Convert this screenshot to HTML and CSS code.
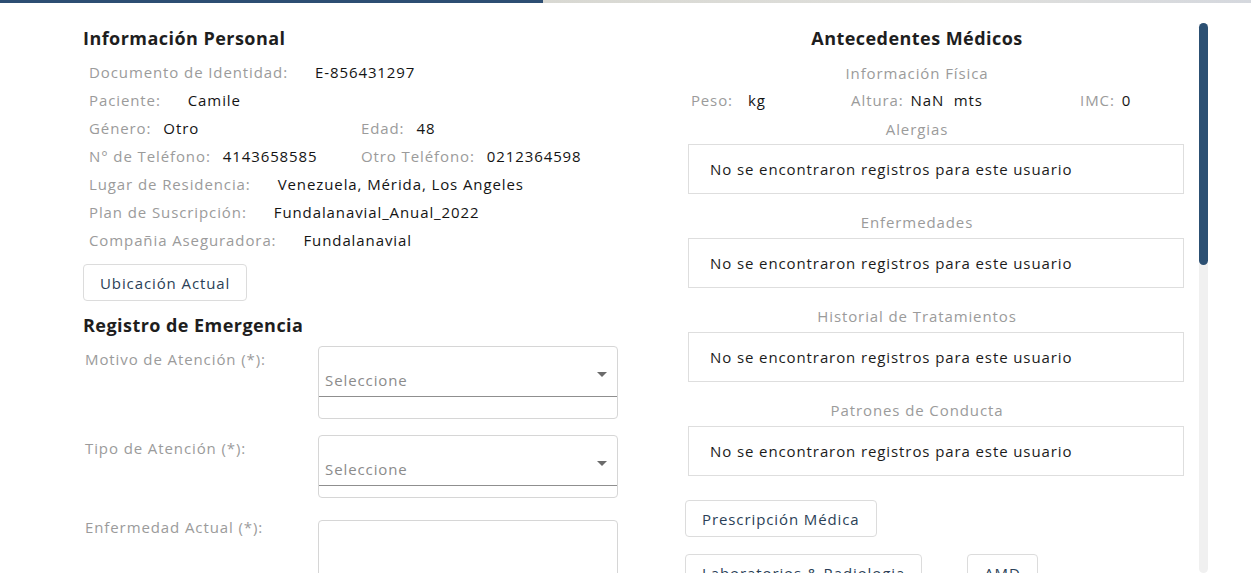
FILE: index.html
```html
<!DOCTYPE html>
<html lang="es">
<head>
<meta charset="utf-8">
<title>Historia</title>
<link rel="stylesheet" href="styles.css">
</head>
<body>
<div class="topbar"><div class="topbar-dark"></div><div class="topbar-light"></div></div>
<div class="frame">
  <div class="scroller">
    <div class="content">
      <section class="col-left">
        <h2 class="title">Información Personal</h2>
        <div class="info">
          <div class="row"><span class="lbl">Documento de Identidad:</span><span class="val wide">E-856431297</span></div>
          <div class="row"><span class="lbl">Paciente:</span><span class="val wide">Camile</span></div>
          <div class="row half">
            <div class="cell"><span class="lbl">Género:</span><span class="val">Otro</span></div>
            <div class="cell"><span class="lbl">Edad:</span><span class="val">48</span></div>
          </div>
          <div class="row half">
            <div class="cell"><span class="lbl">N° de Teléfono:</span><span class="val">4143658585</span></div>
            <div class="cell"><span class="lbl">Otro Teléfono:</span><span class="val">0212364598</span></div>
          </div>
          <div class="row"><span class="lbl">Lugar de Residencia:</span><span class="val wide">Venezuela, Mérida, Los Angeles</span></div>
          <div class="row"><span class="lbl">Plan de Suscripción:</span><span class="val wide">Fundalanavial_Anual_2022</span></div>
          <div class="row"><span class="lbl">Compañia Aseguradora:</span><span class="val wide">Fundalanavial</span></div>
        </div>
        <button class="btn btn-loc">Ubicación Actual</button>
        <h2 class="title title-reg">Registro de Emergencia</h2>
        <div class="form-row">
          <label class="flabel">Motivo de Atención (*):</label>
          <div class="selbox">
            <div class="sel"><span class="ph">Seleccione</span><span class="caret"></span></div>
            <div class="sel-foot"></div>
          </div>
        </div>
        <div class="form-row">
          <label class="flabel">Tipo de Atención (*):</label>
          <div class="selbox">
            <div class="sel"><span class="ph">Seleccione</span><span class="caret"></span></div>
            <div class="sel-foot short"></div>
          </div>
        </div>
        <div class="form-row form-row-text">
          <label class="flabel">Enfermedad Actual (*):</label>
          <div class="textarea"></div>
        </div>
      </section>
      <section class="col-right">
        <h2 class="title center">Antecedentes Médicos</h2>
        <div class="sub sub-first">Información Física</div>
        <div class="phys">
          <div class="pcell"><span class="lbl">Peso:</span><span class="val">kg</span></div>
          <div class="pcell"><span class="lbl">Altura:</span><span class="val tight">NaN&nbsp; mts</span></div>
          <div class="pcell"><span class="lbl">IMC:</span><span class="val tight">0</span></div>
        </div>
        <div class="sub sub-al">Alergias</div>
        <div class="box">No se encontraron registros para este usuario</div>
        <div class="sub sp">Enfermedades</div>
        <div class="box">No se encontraron registros para este usuario</div>
        <div class="sub sp">Historial de Tratamientos</div>
        <div class="box">No se encontraron registros para este usuario</div>
        <div class="sub sp">Patrones de Conducta</div>
        <div class="box">No se encontraron registros para este usuario</div>
        <div class="actions">
          <button class="btn">Prescripción Médica</button>
          <div class="actions-row">
            <button class="btn">Laboratorios &amp; Radiologia</button>
            <button class="btn">AMD</button>
          </div>
        </div>
      </section>
    </div>
  </div>
  <div class="sbar"><div class="sbar-thumb"></div></div>
</div>
</body>
</html>
```
FILE: styles.css
```css
* { box-sizing: border-box; }
html, body { margin: 0; padding: 0; background: #fff; }
body {
  font-family: "Open Sans", "Noto Sans", sans-serif;
  font-size: 15px;
  letter-spacing: 0.9px;
  color: #1b1b1b;
  width: 1251px;
  height: 582px;
  overflow: hidden;
}
.topbar { display: flex; height: 3px; }
.topbar-dark { width: 543px; background: #2d4e73; }
.topbar-light { flex: 1; background: linear-gradient(90deg, #d8d8d2, #dfdfdc 60%, #d5d8de); }

.frame { display: flex; padding: 20px 0 0 60px; }
.scroller {
  width: 1139px;
  height: 550px;
  overflow: hidden;
}
.sbar {
  width: 9px;
  height: 550px;
  background: #f0f0f0;
  border-radius: 5px;
}
.sbar-thumb {
  height: 242px;
  background: #2c5073;
  border-radius: 5px;
}

.content {
  display: grid;
  grid-template-columns: 551px 566px;
  padding-left: 23px;
  align-items: start;
}

.title {
  margin: 0;
  font-size: 18px;
  font-weight: 700;
  letter-spacing: 0.45px;
  color: #1e1e1e;
  line-height: 24px;
  padding-top: 3px;
}
.title.center { text-align: center; }

.info { padding: 8px 0 0 6px; }
.row { display: flex; height: 28px; align-items: center; }
.lbl { color: #9b9b9b; }
.val { color: #141414; margin-left: 12px; }
.val.wide { margin-left: 27px; }
.row.half .cell { width: 272px; display: flex; }

.btn {
  font-family: inherit;
  font-size: 15px;
  letter-spacing: 0.9px;
  color: #2b3f57;
  background: #fff;
  border: 1px solid #dcdcdc;
  border-radius: 4px;
  padding: 0 16px;
  height: 37px;
  cursor: pointer;
}
.btn-loc { margin-top: 10px; }
.title-reg { margin-top: 9px; }

.form-row { display: flex; align-items: flex-start; margin-top: 9px; }
.form-row + .form-row { margin-top: 16px; }
.form-row.form-row-text { margin-top: 22px; }
.flabel { width: 235px; color: #9b9b9b; padding: 3px 0 0 2px; }
.form-row-text .flabel { padding-top: 0; margin-top: -3px; }
.selbox {
  width: 300px;
  border: 1px solid #d6d6d6;
  border-radius: 4px;
}
.sel {
  height: 50px;
  border-bottom: 1px solid #8f8f8f;
  display: flex;
  align-items: flex-end;
  justify-content: space-between;
  padding: 0 10px 4px 6px;
}
.ph { color: #8b8b8b; font-size: 15px; line-height: 24px; }
.caret {
  width: 0; height: 0;
  border-left: 5px solid transparent;
  border-right: 5px solid transparent;
  border-top: 5px solid #6b6b6b;
  margin-bottom: 15px;
}
.sel-foot { height: 21px; }
.sel-foot.short { height: 11px; }
.textarea {
  width: 300px;
  height: 120px;
  border: 1px solid #d6d6d6;
  border-radius: 4px;
}

.col-right { padding-bottom: 20px; }
.sub {
  text-align: center;
  color: #9b9b9b;
  line-height: 22px;
}
.sub.sub-first { margin-top: 12px; }
.sub.sub-al { margin-top: 4px; }
.sub.sp { margin-top: 17px; margin-bottom: 5px; }
.phys { display: grid; grid-template-columns: repeat(3, 1fr); height: 28px; align-items: center; margin-top: 2px; }
.pcell { display: flex; justify-content: center; }
.pcell .val { margin-left: 15px; }
.pcell .val.tight { margin-left: 7px; }
.box {
  margin: 4px 16px 0 54px;
  height: 50px;
  border: 1px solid #dedede;
  display: flex;
  align-items: center;
  padding-left: 21px;
  color: #1b1b1b;
}
.actions { margin: 24px 0 0 51px; display: flex; flex-direction: column; align-items: flex-start; gap: 17px; }
.actions-row { display: flex; gap: 45px; }
```
